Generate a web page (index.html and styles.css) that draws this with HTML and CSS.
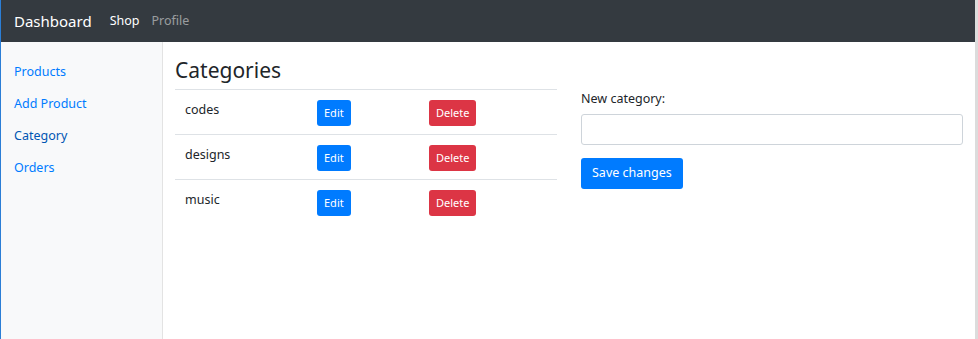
FILE: index.html
```html
<!DOCTYPE html>
<html lang="en">
<head>
  <meta charset="UTF-8" />
  <title>Dashboard</title>
  <link rel="stylesheet" href="styles.css">
</head>
<body>
  <nav class="navbar">
    <span class="brand">Dashboard</span>
    <a class="nav-item active">Shop</a>
    <a class="nav-item">Profile</a>
  </nav>

  <div class="layout">
    <aside class="sidebar">
      <a class="side-link">Products</a>
      <a class="side-link">Add Product</a>
      <a class="side-link current">Category</a>
      <a class="side-link">Orders</a>
    </aside>

    <main class="main">
      <div class="col">
        <h3>Categories</h3>
        <table class="table">
          <tr>
            <td class="name">codes</td>
            <td class="edit"><button class="btn btn-sm btn-primary">Edit</button></td>
            <td><button class="btn btn-sm btn-danger">Delete</button></td>
          </tr>
          <tr>
            <td class="name">designs</td>
            <td class="edit"><button class="btn btn-sm btn-primary">Edit</button></td>
            <td><button class="btn btn-sm btn-danger">Delete</button></td>
          </tr>
          <tr>
            <td class="name">music</td>
            <td class="edit"><button class="btn btn-sm btn-primary">Edit</button></td>
            <td><button class="btn btn-sm btn-danger">Delete</button></td>
          </tr>
        </table>
      </div>

      <div class="col form-col">
        <label class="label" for="cat">New category:</label>
        <input type="text" id="cat" class="form-control" />
        <button class="btn btn-primary">Save changes</button>
      </div>
    </main>
  </div>
</body>
</html>
```

FILE: styles.css
```css
:root {
  --primary: #007bff;
  --primary-dark: #0056b3;
  --danger: #dc3545;
  --dark: #343a40;
  --border: #dee2e6;
}

html, body {
  height: 100%;
}

body {
  margin: 0;
  font-family: 'Noto Sans', 'Open Sans', sans-serif;
  font-size: 12.5px;
  line-height: 1.5;
  color: #212529;
  background: #fff;
  border-left: 1px solid #2b7ed6;
  border-right: 3px solid #dcdcdc;
  box-sizing: border-box;
  display: flex;
  flex-direction: column;
}

.navbar {
  background: var(--dark);
  height: 42px;
  display: flex;
  align-items: center;
  padding: 0 13px;
  flex-shrink: 0;
}

.brand {
  color: #fff;
  font-size: 15px;
  margin-right: 18px;
}

.nav-item {
  color: rgba(255,255,255,0.5);
  font-size: 12.5px;
  margin-right: 12px;
}

.nav-item.active {
  color: #fff;
}

.layout {
  flex: 1;
  display: flex;
}

.sidebar {
  width: 161px;
  background: #f8f9fa;
  border-right: 1px solid #e3e3e3;
  padding-top: 14px;
  display: flex;
  flex-direction: column;
  flex-shrink: 0;
}

.side-link {
  color: var(--primary);
  padding: 6px 13px;
  line-height: 20px;
}

.side-link.current {
  color: var(--primary-dark);
}

.main {
  flex: 1;
  display: flex;
  gap: 24px;
  padding: 0 12px;
}

.col {
  flex: 1;
}

h3 {
  font-size: 21px;
  font-weight: 400;
  margin: 16px 0 6px;
  line-height: 1.2;
}

.table {
  width: 100%;
  border-collapse: collapse;
}

.table td {
  border-top: 1px solid var(--border);
  padding: 10px 10px 8px;
  line-height: 20px;
  vertical-align: top;
}

.table td.name {
  width: 112px;
  padding-top: 10px;
}

.table td.edit {
  width: 92px;
}

.btn {
  font-family: inherit;
  border: 1px solid transparent;
  border-radius: 3px;
  color: #fff;
  font-size: 12.5px;
  line-height: 1.5;
  padding: 5px 10px;
  cursor: pointer;
}

.btn-sm {
  display: block;
  font-size: 11px;
  line-height: 16px;
  padding: 4px 6px;
}

.btn-primary {
  background: var(--primary);
}

.btn-danger {
  background: var(--danger);
}

.form-col {
  padding-top: 48px;
}

.label {
  display: block;
  margin-bottom: 5px;
}

.form-control {
  display: block;
  width: 100%;
  box-sizing: border-box;
  height: 31px;
  border: 1px solid #ced4da;
  border-radius: 3px;
  margin-bottom: 13px;
  font-family: inherit;
}
```
